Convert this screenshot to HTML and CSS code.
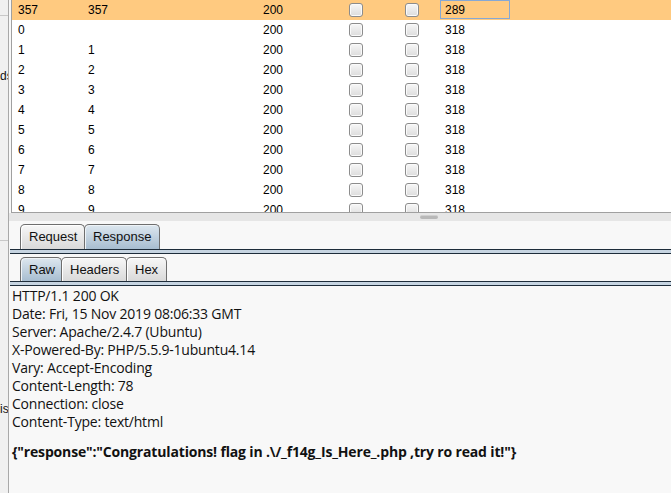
FILE: index.html
```html
<!DOCTYPE html>
<html>
<head>
<meta charset="utf-8">
<link rel="stylesheet" href="styles.css">
</head>
<body>
<div class="app">
  <aside class="side">
    <div class="side-top"></div>
    <div class="side-label side-label-a">ds</div>
    <div class="side-mid"></div>
    <div class="side-label side-label-b">is</div>
  </aside>
  <main class="main">
    <div class="table-wrap">
      <div class="row sel"><span class="c1">357</span><span class="c2">357</span><span class="c3">200</span><span class="c4"><i class="cb"></i></span><span class="c5"><i class="cb"></i></span><span class="c6 focus">289</span></div>
      <div class="row"><span class="c1">0</span><span class="c2"></span><span class="c3">200</span><span class="c4"><i class="cb"></i></span><span class="c5"><i class="cb"></i></span><span class="c6">318</span></div>
      <div class="row"><span class="c1">1</span><span class="c2">1</span><span class="c3">200</span><span class="c4"><i class="cb"></i></span><span class="c5"><i class="cb"></i></span><span class="c6">318</span></div>
      <div class="row"><span class="c1">2</span><span class="c2">2</span><span class="c3">200</span><span class="c4"><i class="cb"></i></span><span class="c5"><i class="cb"></i></span><span class="c6">318</span></div>
      <div class="row"><span class="c1">3</span><span class="c2">3</span><span class="c3">200</span><span class="c4"><i class="cb"></i></span><span class="c5"><i class="cb"></i></span><span class="c6">318</span></div>
      <div class="row"><span class="c1">4</span><span class="c2">4</span><span class="c3">200</span><span class="c4"><i class="cb"></i></span><span class="c5"><i class="cb"></i></span><span class="c6">318</span></div>
      <div class="row"><span class="c1">5</span><span class="c2">5</span><span class="c3">200</span><span class="c4"><i class="cb"></i></span><span class="c5"><i class="cb"></i></span><span class="c6">318</span></div>
      <div class="row"><span class="c1">6</span><span class="c2">6</span><span class="c3">200</span><span class="c4"><i class="cb"></i></span><span class="c5"><i class="cb"></i></span><span class="c6">318</span></div>
      <div class="row"><span class="c1">7</span><span class="c2">7</span><span class="c3">200</span><span class="c4"><i class="cb"></i></span><span class="c5"><i class="cb"></i></span><span class="c6">318</span></div>
      <div class="row"><span class="c1">8</span><span class="c2">8</span><span class="c3">200</span><span class="c4"><i class="cb"></i></span><span class="c5"><i class="cb"></i></span><span class="c6">318</span></div>
      <div class="row"><span class="c1">9</span><span class="c2">9</span><span class="c3">200</span><span class="c4"><i class="cb"></i></span><span class="c5"><i class="cb"></i></span><span class="c6">318</span></div>
    </div>
    <div class="splitter"><span class="grip"></span></div>
    <div class="tabs tabs-outer">
      <span class="tab t-request">Request</span><span class="tab t-response active">Response</span>
    </div>
    <div class="band"></div>
    <div class="tabs tabs-inner">
      <span class="tab t-raw active">Raw</span><span class="tab t-headers">Headers</span><span class="tab t-hex">Hex</span>
    </div>
    <div class="band"></div>
    <div class="body">
      <div class="line">HTTP/1.1 200 OK</div>
      <div class="line">Date: Fri, 15 Nov 2019 08:06:33 GMT</div>
      <div class="line">Server: Apache/2.4.7 (Ubuntu)</div>
      <div class="line">X-Powered-By: PHP/5.5.9-1ubuntu4.14</div>
      <div class="line">Vary: Accept-Encoding</div>
      <div class="line">Content-Length: 78</div>
      <div class="line">Connection: close</div>
      <div class="line">Content-Type: text/html</div>
      <div class="gap"></div>
      <div class="line json">{"response":"Congratulations! flag in .\/_f14g_Is_Here_.php ,try ro read it!"}</div>
    </div>
  </main>
</div>
</body>
</html>
```

FILE: styles.css
```css
html, body {
  margin: 0;
  padding: 0;
}
body {
  width: 671px;
  height: 493px;
  overflow: hidden;
  background: #f8f8f8;
  font-family: "Liberation Sans", Arial, sans-serif;
  color: #000;
}
.app {
  display: flex;
  height: 493px;
}
.side {
  width: 8px;
  flex: none;
  background: #f0f0f0;
  border-right: 1px solid #a8a8a8;
  overflow: hidden;
  display: flex;
  flex-direction: column;
}
.side-top {
  height: 15px;
  border-bottom: 1px solid #c8c8c8;
}
.side-label {
  font-size: 12px;
  line-height: 14px;
  white-space: nowrap;
  color: #111;
}
.side-label-a {
  margin-top: 53px;
}
.side-mid {
  margin-top: 157px;
  height: 0;
  border-bottom: 1px solid #c8c8c8;
}
.side-label-b {
  margin-top: 161px;
}
.main {
  flex: 1;
  min-width: 0;
  display: flex;
  flex-direction: column;
}
.table-wrap {
  margin-left: 2px;
  height: 212px;
  flex: none;
  overflow: hidden;
  background: #fff;
  border-left: 1px solid #a0a0a0;
  border-bottom: 1px solid #a0a0a0;
}
.row {
  display: grid;
  grid-template-columns: 70px 175px 86px 56px 41px 70px 1fr;
  height: 20px;
  font-size: 12px;
  line-height: 20px;
}
.row.sel {
  background: #ffca80;
}
.row > span {
  padding-left: 6px;
  white-space: nowrap;
}
.row > .c6 {
  padding-left: 5px;
}
.row > .focus {
  height: 19px;
  box-shadow: inset 0 0 0 1px #86a8d4;
}
.cb {
  display: block;
  width: 12px;
  height: 12px;
  margin-top: 3px;
  border: 1px solid #8c8c8c;
  border-radius: 3px;
  background: linear-gradient(#f7f7f7, #dcdcdc);
  box-shadow: inset 0 0 0 1px #fafafa;
}
.splitter {
  height: 8px;
  flex: none;
  background: #e6e6e6;
  position: relative;
}
.grip {
  position: absolute;
  left: 411px;
  top: 2px;
  width: 18px;
  height: 3px;
  border-radius: 2px;
  background: #b8b8b8;
  border-top: 1px solid #d0d0d0;
}
.tabs {
  display: flex;
  padding-left: 11px;
  height: 25px;
  flex: none;
  align-items: flex-end;
}
.tabs-outer {
  margin-top: 3px;
}
.tabs-inner {
  margin-top: 3px;
  height: 24px;
}
.tab {
  height: 100%;
  box-sizing: border-box;
  padding: 0 0 0 8px;
  font-size: 13px;
  line-height: 24px;
  border: 1px solid #6e6e6e;
  border-bottom: none;
  border-radius: 5px 5px 0 0;
  background: linear-gradient(#f7f7f7, #d9d9d9);
  box-shadow: inset 1px 1px 0 #fff;
  margin-right: -1px;
  color: #111;
  white-space: nowrap;
  overflow: hidden;
}
.tab.active {
  background: linear-gradient(#dde7ef, #a7bdd0);
  box-shadow: inset 1px 1px 0 #eef3f7;
}
.t-request { width: 65px; }
.t-response { width: 76px; }
.t-raw { width: 42px; }
.t-headers { width: 66px; }
.t-hex { width: 41px; }
.band {
  margin-left: 1px;
  height: 3px;
  flex: none;
  background: #c6d4e1;
  border-top: 1px solid #1d2c3a;
  border-bottom: 1px solid #1d2c3a;
}
.body {
  padding-left: 3px;
  padding-top: 1px;
  font-family: "Open Sans", "Noto Sans", sans-serif;
  font-size: 14px;
  line-height: 18px;
  letter-spacing: -0.2px;
  color: #111;
}
.line {
  white-space: nowrap;
}
.gap {
  height: 12px;
}
.json {
  font-weight: bold;
  letter-spacing: -0.16px;
}
```
